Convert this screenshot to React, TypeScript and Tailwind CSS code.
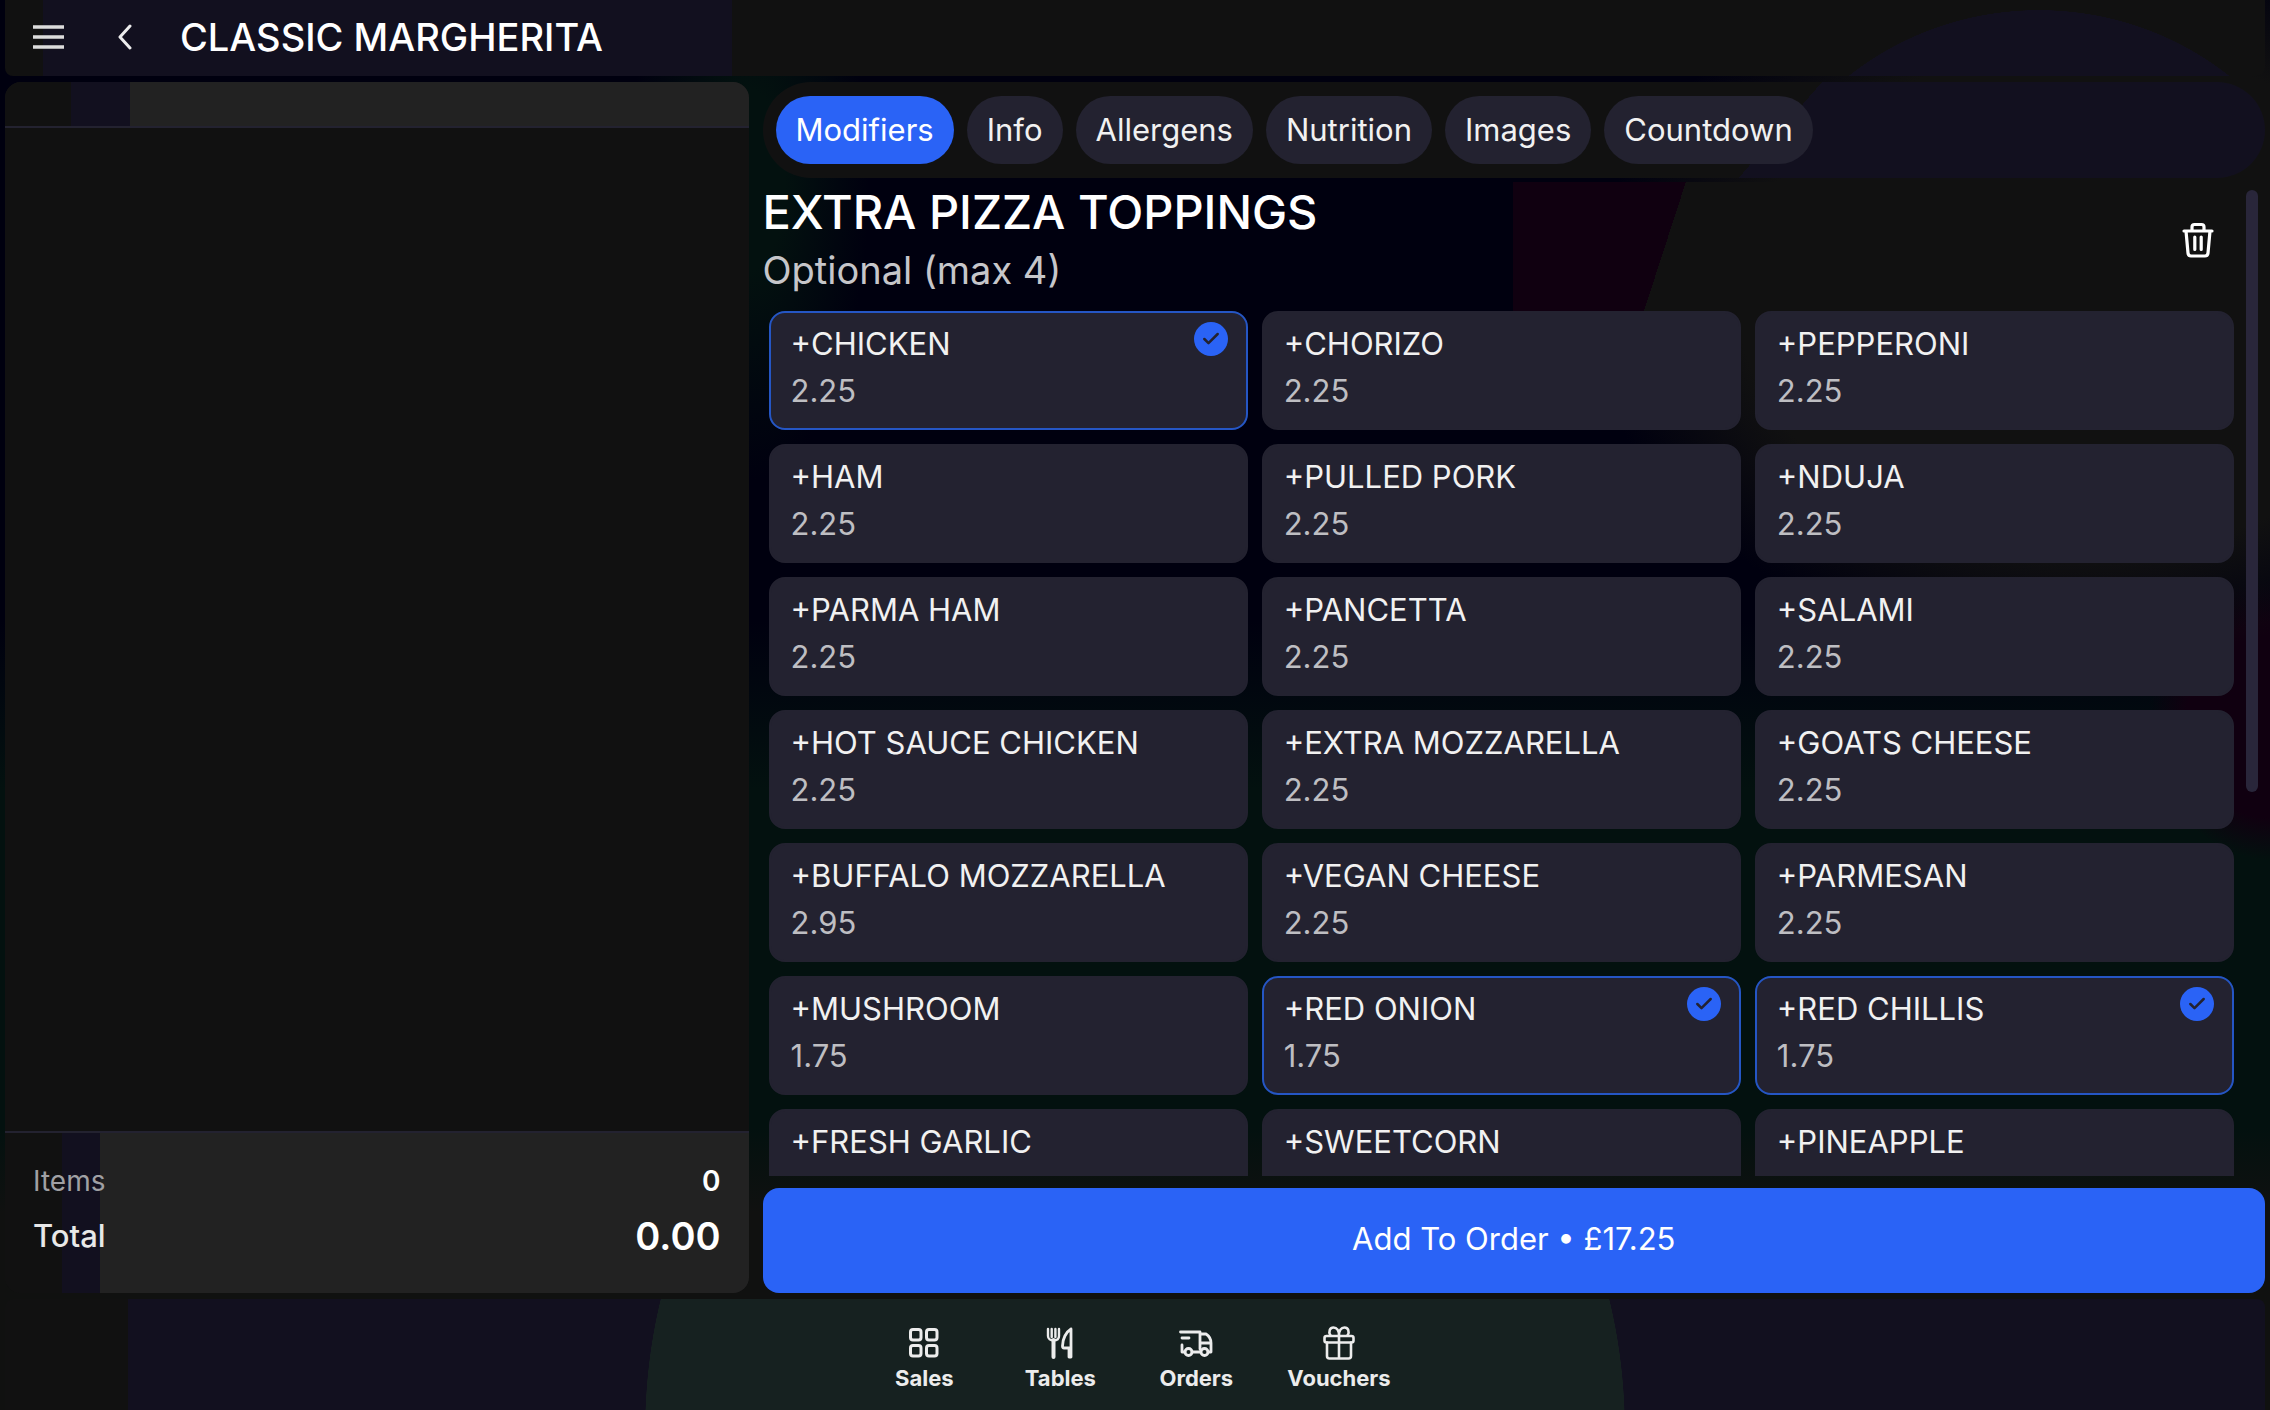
import React, { useState } from 'react';
import { Check } from 'lucide-react';

interface Modifier {
  name: string;
  price?: string;
}

const TABS = ['Modifiers', 'Info', 'Allergens', 'Nutrition', 'Images', 'Countdown'];

const MODIFIERS: Modifier[] = [
  { name: 'CHICKEN', price: '2.25' },
  { name: 'CHORIZO', price: '2.25' },
  { name: 'PEPPERONI', price: '2.25' },
  { name: 'HAM', price: '2.25' },
  { name: 'PULLED PORK', price: '2.25' },
  { name: 'NDUJA', price: '2.25' },
  { name: 'PARMA HAM', price: '2.25' },
  { name: 'PANCETTA', price: '2.25' },
  { name: 'SALAMI', price: '2.25' },
  { name: 'HOT SAUCE CHICKEN', price: '2.25' },
  { name: 'EXTRA MOZZARELLA', price: '2.25' },
  { name: 'GOATS CHEESE', price: '2.25' },
  { name: 'BUFFALO MOZZARELLA', price: '2.95' },
  { name: 'VEGAN CHEESE', price: '2.25' },
  { name: 'PARMESAN', price: '2.25' },
  { name: 'MUSHROOM', price: '1.75' },
  { name: 'RED ONION', price: '1.75' },
  { name: 'RED CHILLIS', price: '1.75' },
  { name: 'FRESH GARLIC' },
  { name: 'SWEETCORN' },
  { name: 'PINEAPPLE' },
];

const GridIcon = () => (
  <svg width="32" height="32" viewBox="0 0 32 32" fill="none" stroke="currentColor" strokeWidth="3">
    <rect x="2.5" y="2.5" width="10.5" height="10.5" rx="2.5" />
    <rect x="18.5" y="2.5" width="10.5" height="10.5" rx="2.5" />
    <rect x="2.5" y="18.5" width="10.5" height="10.5" rx="2.5" />
    <rect x="18.5" y="18.5" width="10.5" height="10.5" rx="2.5" />
  </svg>
);

const CutleryIcon = () => (
  <svg width="32" height="32" viewBox="0 0 32 32" fill="none" stroke="currentColor" strokeWidth="2.4" strokeLinecap="round" strokeLinejoin="round">
    <path d="M4 2v7c0 3 2.5 4.5 5.5 4.5S15 12 15 9V2M7.7 2v8M11.4 2v8" />
    <path d="M9.5 13v17" strokeWidth="4" />
    <path d="M27 30V2c-5 3-8.500 10-8.500 17 0 1 .5 2 1.500 2h5v9z" strokeWidth="2.8" />
  </svg>
);

const TruckIcon = () => (
  <svg width="34" height="32" viewBox="0 0 34 32" fill="none" stroke="currentColor" strokeWidth="2.8" strokeLinecap="round" strokeLinejoin="round">
    <path d="M1.5 5H21v17M3 11h7M3 18v7h3M13 25h8.5M21 7h6c3 2 5 5.5 5 9v9h-3M21 16h11" />
    <circle cx="9.5" cy="25" r="3.5" />
    <circle cx="25.5" cy="25" r="3.5" />
  </svg>
);

const GiftIcon = () => (
  <svg width="32" height="34" viewBox="0 0 32 34" fill="none" stroke="currentColor" strokeWidth="2.6" strokeLinecap="round" strokeLinejoin="round">
    <rect x="1.5" y="10" width="29" height="6.5" rx="2" />
    <path d="M4 16.5V30c0 1.5 1 2.5 2.5 2.5h19c1.5 0 2.5-1 2.5-2.5V16.5M16 10v22" />
    <path d="M16 9.5C16 5 14 1.5 10.5 1.5 7 1.5 5 5.5 7.5 9.5M16 9.5c0-4.5 2-8 5.5-8s5.5 4 3 8" />
  </svg>
);

const TrashIcon = () => (
  <svg width="32" height="36" viewBox="0 0 32 36" fill="none" stroke="currentColor" strokeWidth="3.2" strokeLinecap="round" strokeLinejoin="round">
    <path d="M2 9h28M4 9l2 22c.2 2 1.5 3 3 3h14c1.5 0 2.8-1 3-3l2-22M10 9V5c0-1.500 1-2.500 2.500-2.500h7C21 2.500 22 3.500 22 5v4M12.800 15v12.500M19.200 15v12.500" />
  </svg>
);

const NAV = [
  { label: 'Sales', icon: <GridIcon /> },
  { label: 'Tables', icon: <CutleryIcon /> },
  { label: 'Orders', icon: <TruckIcon /> },
  { label: 'Vouchers', icon: <GiftIcon /> },
];

const ModifierCard: React.FC<Modifier & { selected: boolean; onToggle: () => void }> = ({ name, price, selected, onToggle }) => (
  <button
    onClick={onToggle}
    aria-pressed={selected}
    className={`relative h-[119px] px-5 pt-[7px] rounded-2xl border-2 bg-[#232230] text-left flex flex-col justify-start ${
      selected ? 'border-[#2556c4]' : 'border-[#232230]'
    }`}
  >
    <span className="text-[31px] leading-[47px] text-[#f1f1f1]">+{name}</span>
    {price && <span className="text-[31px] leading-[47px] text-[#bebec2]">{price}</span>}
    {selected && (
      <span className="absolute top-[9px] right-[18px] size-[34px] rounded-full bg-[#2a63f6] text-[#232230] flex items-center justify-center">
        <Check size={20} strokeWidth={3} />
      </span>
    )}
  </button>
);

const App: React.FC = () => {
  const [tab, setTab] = useState('Modifiers');
  const [selected, setSelected] = useState<string[]>(['CHICKEN', 'RED ONION', 'RED CHILLIS']);

  const toggle = (name: string) => {
    setSelected(prev => (prev.includes(name) ? prev.filter(n => n !== name) : [...prev, name]));
  };

  return (
    <div className="h-screen px-[5px] flex flex-col gap-1.5 overflow-hidden bg-[#00000f] bg-[linear-gradient(to_bottom,transparent_80%,#101110_86%),radial-gradient(ellipse_500px_360px_at_92%_300px,#111_70%,transparent_100%),radial-gradient(ellipse_120px_140px_at_100%_720px,#100010_70%,transparent_100%),linear-gradient(to_bottom,transparent_44%,#03110f_56%),radial-gradient(ellipse_120px_300px_at_33%_180px,#03110f_30%,transparent_100%)] text-white font-['Inter',sans-serif]">
      <header className="h-[76px] shrink-0 px-7 pb-0.5 flex items-center rounded-b-lg bg-[#111] bg-[radial-gradient(ellipse_300px_290px_at_90%_300px,#12101f_99.9%,transparent_100%),linear-gradient(to_right,#111_38px,#12101f_38px,#12101f_727px,#111_727px)]">
        <button aria-label="Menu" className="text-[#dcdcdc]">
          <svg width="31" height="28" viewBox="0 0 31 28" stroke="currentColor" strokeWidth="3.5">
            <path d="M0 4h31M0 14h31M0 24h31" />
          </svg>
        </button>
        <button aria-label="Back" className="ml-[54px] text-[#ececec]">
          <svg width="14" height="26" viewBox="0 0 14 26" fill="none" stroke="currentColor" strokeWidth="3" strokeLinecap="round" strokeLinejoin="round">
            <path d="M12 2L2 13l10 11" />
          </svg>
        </button>
        <h1 className="ml-12 text-[38px] leading-[48px] font-medium">CLASSIC MARGHERITA</h1>
      </header>

      <main className="flex-1 min-h-0 flex gap-3.5">
        <aside className="w-[32.9%] shrink-0 flex flex-col rounded-2xl overflow-hidden bg-[#111]">
          <div className="h-[46px] border-b-2 border-[#232230] bg-[linear-gradient(to_right,#111_66px,#12101f_66px,#12101f_125px,#222_125px)]" />
          <div className="flex-1" />
          <div className="h-[162px] px-7 pt-6 border-t-2 border-[#232230] bg-[linear-gradient(to_right,#111_57px,#12101f_57px,#12101f_95px,#222_95px)]">
            <div className="flex justify-between items-center text-[28px] leading-[48px]">
              <span className="text-[#a0a0a4]">Items</span>
              <span className="font-semibold">0</span>
            </div>
            <div className="flex justify-between items-center leading-[62px]">
              <span className="text-[31px] font-medium text-[#e8e8e8]">Total</span>
              <span className="text-[38px] font-semibold">0.00</span>
            </div>
          </div>
        </aside>

        <section className="flex-1 min-w-0 flex flex-col">
          <nav className="h-24 shrink-0 px-[13px] flex items-center gap-[13px] rounded-full bg-[linear-gradient(131deg,#111_66.8%,#12101f_66.8%)]">
            {TABS.map(t => (
              <button
                key={t}
                onClick={() => setTab(t)}
                className={`h-[68px] px-5 rounded-full text-[31px] leading-10 ${t === tab ? 'bg-[#2a63f6] text-white' : 'bg-[#232230] text-[#f1f1f1]'}`}
              >
                {t}
              </button>
            ))}
          </nav>

          <div className="flex-1 min-h-0 mt-1 flex overflow-hidden">
            <div className="flex-1 min-w-0">
              <div className="h-[129px] pr-5 flex items-start justify-between bg-[linear-gradient(108deg,transparent_61%,#111_61%),linear-gradient(to_right,transparent_51%,#100010_51%)]">
                <div>
                  <h2 className="text-[47px] leading-[60px] font-medium">EXTRA PIZZA TOPPINGS</h2>
                  <p className="text-[38px] leading-[56px] text-[#c6c6ca]">Optional (max 4)</p>
                </div>
                <button aria-label="Clear selection" className="mt-10">
                  <TrashIcon />
                </button>
              </div>
              <div className="pl-1.5 grid grid-cols-3 gap-3.5">
                {MODIFIERS.map(m => (
                  <ModifierCard key={m.name} {...m} selected={selected.includes(m.name)} onToggle={() => toggle(m.name)} />
                ))}
              </div>
            </div>
            <div className="w-3 h-[602px] mt-2 ml-3 mr-[7px] shrink-0 rounded-full bg-[#29263a]" />
          </div>

          <button className="h-[105px] mt-3 pb-1 shrink-0 rounded-2xl bg-[#2a63f6] text-[31px] leading-10">
            Add To Order • £17.25
          </button>
        </section>
      </main>

      <footer className="h-[111px] shrink-0 pt-2 flex justify-center items-center gap-3.5 rounded-t-lg bg-[radial-gradient(ellipse_490px_520px_at_50%_130px,#162120_99.9%,transparent_100%),linear-gradient(to_right,#111_123px,#12101f_123px)]">
        {NAV.map(n => (
          <button key={n.label} className="min-w-[122px] px-4 flex flex-col items-center gap-1 text-[#ececec]">
            <span className="h-[34px] flex items-center">{n.icon}</span>
            <span className="text-[22px] leading-7 font-bold">{n.label}</span>
          </button>
        ))}
      </footer>
    </div>
  );
};

export default App;
